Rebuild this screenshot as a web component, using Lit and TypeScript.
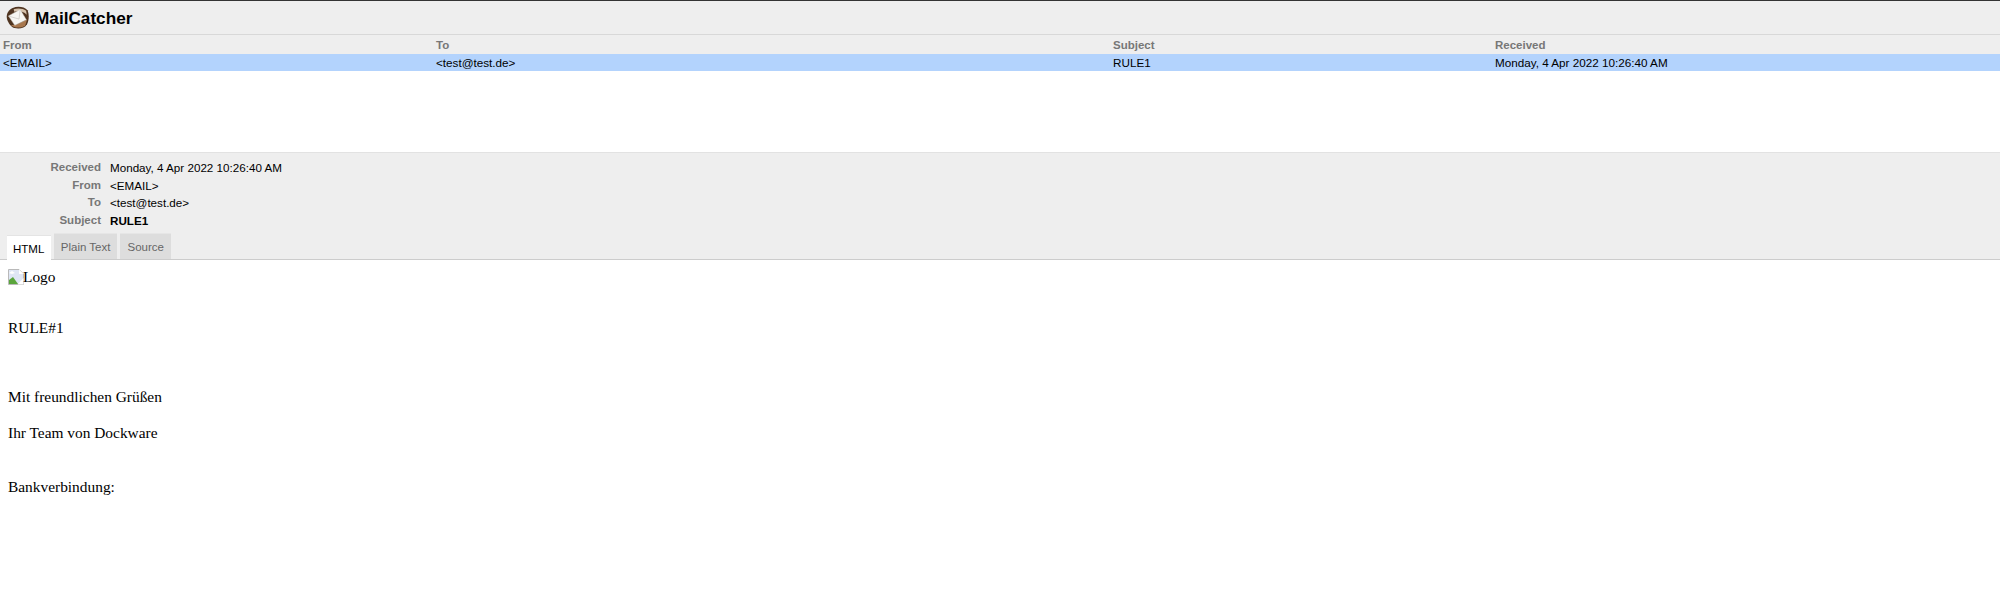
import { LitElement, html, css } from "lit";
import { customElement } from "lit/decorators.js";

@customElement("app-root")
export class AppRoot extends LitElement {
  static styles = css`
    :host { display: block; width: 100%; height: 599px; overflow: hidden; background: #fff; font-family: "Liberation Sans", Arial, sans-serif; font-size: 12px; color: #000; }
    .top { height: 33px; border-top: 1px solid #333; border-bottom: 1px solid #d8d8d8; background: #eee; display: flex; align-items: center; gap: 6px; padding-left: 6px; box-sizing: content-box; }
    .top svg { width: 23px; height: 23px; flex: none; }
    .brand { font-size: 17.2px; font-weight: 700; line-height: 24px; }
    .list { height: 117px; }
    .row { display: grid; grid-template-columns: 433px 677px 382px 1fr; height: 18px; line-height: 18px; }
    .row > div { padding-left: 3px; white-space: nowrap; }
    .head { background: #eee; color: #777; font-weight: 700; font-size: 11.5px; height: 19px; line-height: 21px; }
    .sel { background: #b3d3fd; height: 17px; line-height: 17px; font-size: 11.7px; }
    .meta { background: #eee; border-top: 1px solid #e2e2e2; height: 106px; border-bottom: 1px solid #ccc; display: flex; flex-direction: column; }
    .fields { display: grid; grid-template-columns: 101px 1fr; column-gap: 9px; padding-top: 6px; line-height: 17.5px; font-size: 11.65px; }
    .fields .k { text-align: right; color: #777; font-weight: 700; font-size: 11.5px; }
    .fields .b { font-weight: 700; }
    .tabs { display: flex; gap: 3px; padding-left: 6.5px; margin-top: auto; align-items: flex-end; font-size: 11.5px; }
    .tab { background: #ddd; color: #666; height: 25px; line-height: 26px; padding: 0 7px; border-top: 1px solid #e6e6e6; }
    .tab.on { background: #fff; color: #000; height: 24px; padding: 0 6.5px; margin-bottom: -1px; border-top: 1px solid #e4e4e4; }
    .body { font-family: "Liberation Serif", "Times New Roman", serif; font-size: 15.4px; padding: 7px 0 0 8px; line-height: 18px; color: #000; }
    .logo { display: flex; align-items: center; height: 20px; }
    .logo svg { width: 16px; height: 16px; flex: none; margin-right: -1px; }
    .body p { margin: 0; }
    .r { margin-top: 32px !important; }
    .g { margin-top: 51px !important; }
    .t { margin-top: 18px !important; }
    .bv { margin-top: 36px !important; }
  `;

  render() {
    return html`
      <div class="top">
        <svg viewBox="0 0 24 24" aria-hidden="true">
          <path d="M7 2 C12 0 19 .6 22.5 4.5 C24.4 9 24 15 22 19 C19.5 23 14 24.2 9 23 C5.5 22 2.5 18 1.2 14 C0 10 1 5 7 2 Z" fill="#4f3420"/>
          <path d="M5 20 C9 23 15 23.4 20 20.5 L22 14 L12 19 Z" fill="#a8774d"/>
          <path d="M8 3.4 C12 1.8 18 2.4 21 5 L21.6 9 C18 5 12 4.2 8.6 6 Z" fill="#d7c3ac"/>
          <path d="M2.6 10.4 L14.8 3.6 L21.2 14.4 L9.2 20.2 Z" fill="#f7f6f2" stroke="#cfcac2" stroke-width=".5"/>
          <path d="M2.8 10.6 L13.6 13.6 L14.8 3.8" fill="none" stroke="#c6c2bb" stroke-width=".7"/>
        </svg>
        <div class="brand">MailCatcher</div>
      </div>
      <div class="list">
        <div class="row head"><div>From</div><div>To</div><div>Subject</div><div>Received</div></div>
        <div class="row sel"><div>&lt;EMAIL&gt;</div><div>&lt;test@test.de&gt;</div><div>RULE1</div><div>Monday, 4 Apr 2022 10:26:40 AM</div></div>
      </div>
      <div class="meta">
        <div class="fields">
          <div class="k">Received</div><div>Monday, 4 Apr 2022 10:26:40 AM</div>
          <div class="k">From</div><div>&lt;EMAIL&gt;</div>
          <div class="k">To</div><div>&lt;test@test.de&gt;</div>
          <div class="k">Subject</div><div class="b">RULE1</div>
        </div>
        <div class="tabs">
          <div class="tab on">HTML</div>
          <div class="tab">Plain Text</div>
          <div class="tab">Source</div>
        </div>
      </div>
      <div class="body">
        <div class="logo">
          <svg viewBox="0 0 16 16" aria-hidden="true">
            <path d="M.5.5 H11 L15.5 5 V15.5 H.5 Z" fill="#dfe6f5" stroke="#b9b9b9"/>
            <path d="M1 15 V11 L5 8 L10 15 Z" fill="#5aa53c"/>
            <path d="M1 4 L4 2 L7 4 L4 5 Z" fill="#fff"/>
            <path d="M11 .5 V5 H15.5 L11 .5" fill="#fff"/>
            <path d="M10 15 L15.5 9 V15.5 H10 Z" fill="#fff"/>
          </svg>
          <span>Logo</span>
        </div>
        <p class="r">RULE#1</p>
        <p class="g">Mit freundlichen Grüßen</p>
        <p class="t">Ihr Team von Dockware</p>
        <p class="bv">Bankverbindung:</p>
      </div>
    `;
  }
}
